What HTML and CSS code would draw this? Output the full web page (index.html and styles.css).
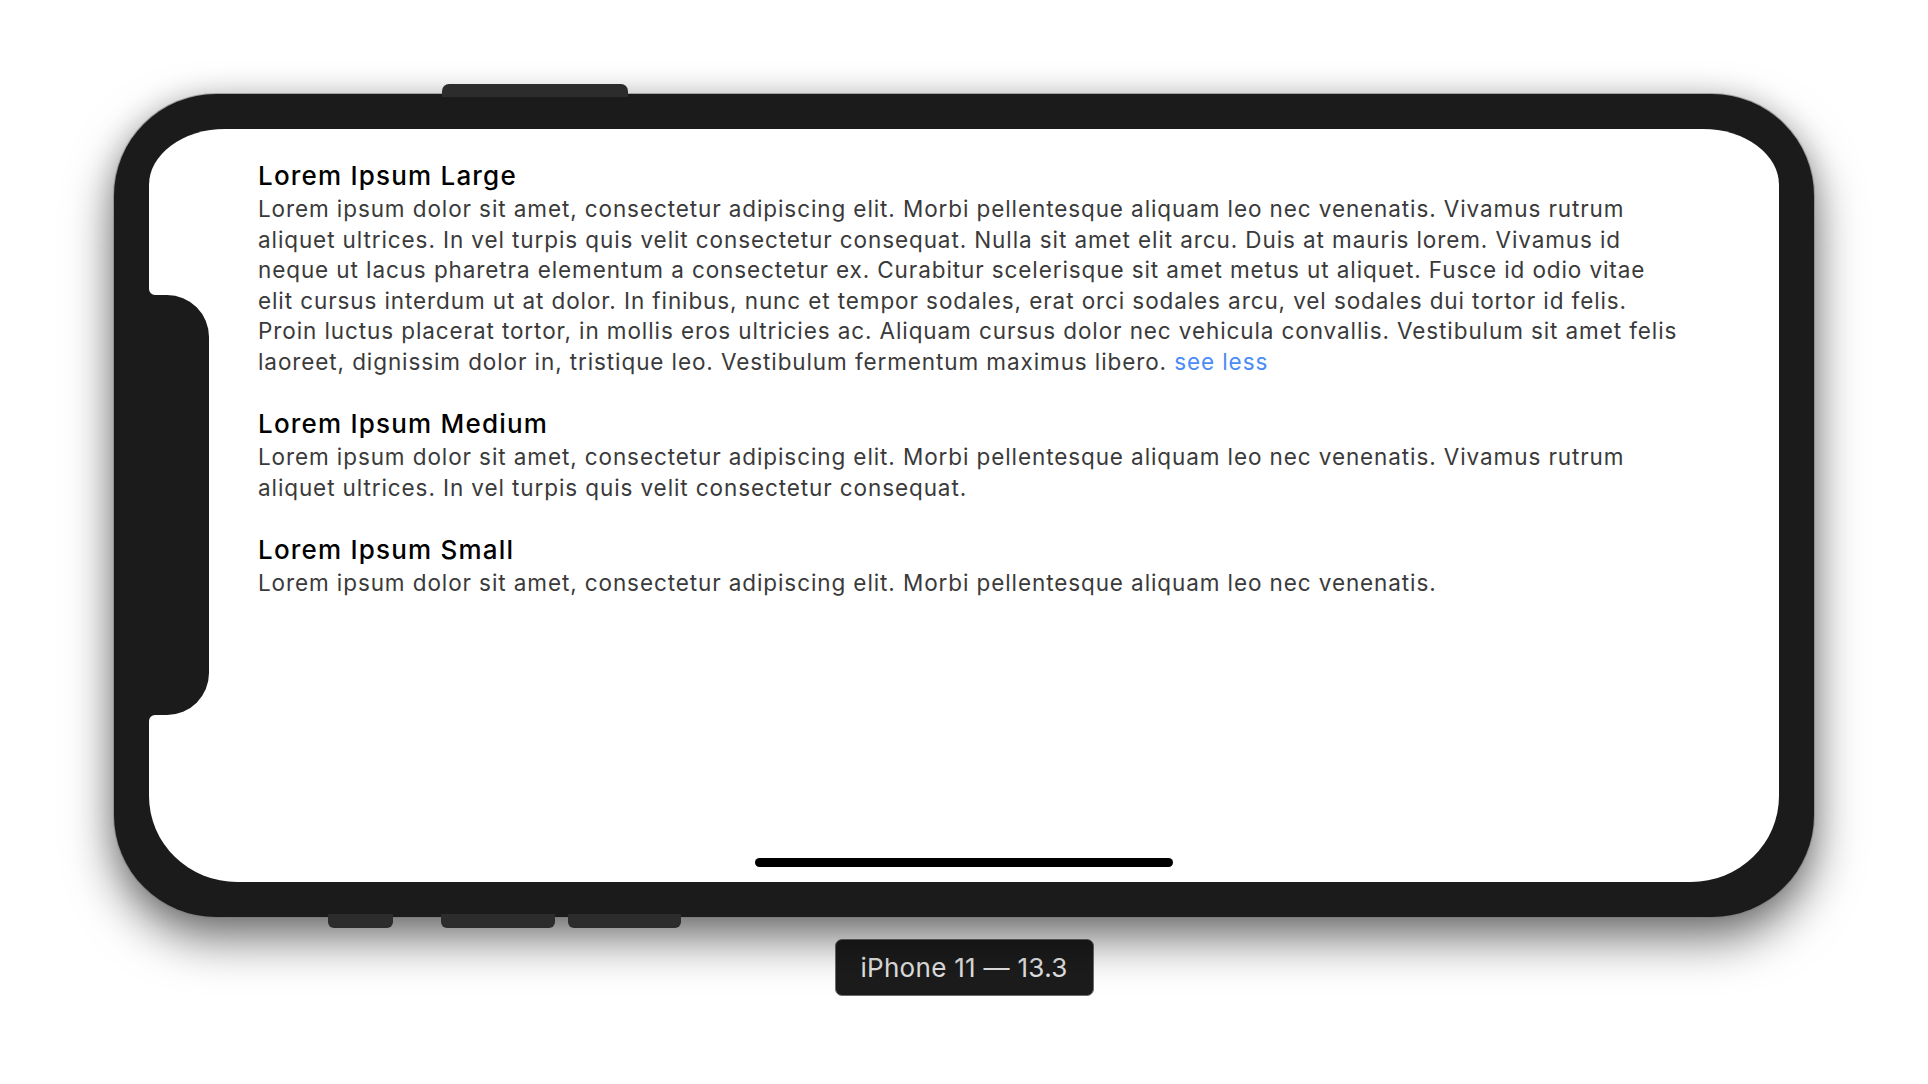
FILE: index.html
```html
<!DOCTYPE html>
<html lang="en">
<head>
<meta charset="utf-8">
<title>iPhone 11 — 13.3</title>
<link rel="stylesheet" href="styles.css">
</head>
<body>
<div class="stage">
  <div class="device">
    <div class="hw-btn hw-side"></div>
    <div class="hw-btn hw-mute"></div>
    <div class="hw-btn hw-vol-up"></div>
    <div class="hw-btn hw-vol-down"></div>
    <div class="screen">
      <svg class="sensor" width="60" height="432" viewBox="0 0 60 432" aria-hidden="true">
        <path d="M0,0 A6,6 0 0 0 6,6 L18,6 A42,42 0 0 1 60,48 L60,384 A42,42 0 0 1 18,426 L6,426 A6,6 0 0 0 0,432 Z" fill="#1b1b1b"/>
      </svg>
      <div class="content">
        <section class="item">
          <h2 class="item-title">Lorem Ipsum Large</h2>
          <p class="item-text">Lorem ipsum dolor sit amet, consectetur adipiscing elit. Morbi pellentesque aliquam leo nec venenatis. Vivamus rutrum aliquet ultrices. In vel turpis quis velit consectetur consequat. Nulla sit amet elit arcu. Duis at mauris lorem. Vivamus id neque ut lacus pharetra elementum a consectetur ex. Curabitur scelerisque sit amet metus ut aliquet. Fusce id odio vitae elit cursus interdum ut at dolor. In finibus, nunc et tempor sodales, erat orci sodales arcu, vel sodales dui tortor id felis. Proin luctus placerat tortor, in mollis eros ultricies ac. Aliquam cursus dolor nec vehicula convallis. Vestibulum sit amet felis laoreet, dignissim dolor in, tristique leo. Vestibulum fermentum maximus libero. <a class="see-less" href="#">see less</a></p>
        </section>
        <section class="item">
          <h2 class="item-title">Lorem Ipsum Medium</h2>
          <p class="item-text">Lorem ipsum dolor sit amet, consectetur adipiscing elit. Morbi pellentesque aliquam leo nec venenatis. Vivamus rutrum aliquet ultrices. In vel turpis quis velit consectetur consequat.</p>
        </section>
        <section class="item">
          <h2 class="item-title">Lorem Ipsum Small</h2>
          <p class="item-text">Lorem ipsum dolor sit amet, consectetur adipiscing elit. Morbi pellentesque aliquam leo nec venenatis.</p>
        </section>
      </div>
      <div class="home-indicator"></div>
    </div>
  </div>
  <div class="device-label">iPhone 11 — 13.3</div>
</div>
</body>
</html>
```
FILE: styles.css
```css
html, body {
  margin: 0;
  padding: 0;
  background: #ffffff;
}

body {
  width: 1928px;
  height: 1084px;
  overflow: hidden;
  font-family: Inter, "Noto Sans", "DejaVu Sans", sans-serif;
}

.stage {
  display: flex;
  flex-direction: column;
  align-items: center;
  padding-top: 94px;
}

.device {
  position: relative;
  box-sizing: border-box;
  width: 1700px;
  height: 823px;
  padding: 35px;
  background: #1b1b1b;
  border-radius: 102px;
  box-shadow:
    0 0 0 1px rgba(120, 120, 120, 0.55),
    0 22px 48px rgba(0, 0, 0, 0.55),
    0 0 28px rgba(0, 0, 0, 0.14);
}

.hw-btn {
  position: absolute;
  background: #2c2c2c;
  border-radius: 6px;
}

.hw-side {
  left: 328px;
  top: -10px;
  width: 186px;
  height: 13px;
  border-radius: 7px 7px 0 0;
}

.hw-mute {
  left: 214px;
  bottom: -11px;
  width: 65px;
  height: 14px;
  border-radius: 0 0 6px 6px;
}

.hw-vol-up {
  left: 327px;
  bottom: -11px;
  width: 114px;
  height: 14px;
  border-radius: 0 0 6px 6px;
}

.hw-vol-down {
  left: 454px;
  bottom: -11px;
  width: 113px;
  height: 14px;
  border-radius: 0 0 6px 6px;
}

.screen {
  position: relative;
  box-sizing: border-box;
  width: 1630px;
  height: 753px;
  background: #ffffff;
  border-radius: 76px 76px 88px 88px / 56px 56px 86px 86px;
  display: flex;
  flex-direction: column;
  overflow: hidden;
}

.sensor {
  position: absolute;
  left: 0;
  top: 160px;
  display: block;
}

.content {
  flex: 1;
  padding: 29px 99px 0 109px;
  display: flex;
  flex-direction: column;
  gap: 29px;
}

.item {
  display: flex;
  flex-direction: column;
}

.item-title {
  margin: 0;
  font-size: 26px;
  line-height: 36px;
  font-weight: 500;
  color: #000000;
  letter-spacing: 1.2px;
}

.item-text {
  margin: 0;
  font-size: 22.5px;
  line-height: 30.5px;
  font-weight: 400;
  color: #3a3a3a;
  letter-spacing: 0.9px;
}

.see-less {
  color: #4a8cf6;
  text-decoration: none;
}

.home-indicator {
  align-self: center;
  width: 418px;
  height: 9px;
  margin-bottom: 15px;
  background: #000000;
  border-radius: 5px;
}

.device-label {
  box-sizing: border-box;
  margin-top: 22px;
  width: 259px;
  height: 57px;
  display: flex;
  align-items: center;
  justify-content: center;
  background: #1c1c1c;
  border: 1px solid #6e6e6e;
  border-radius: 7px;
  color: #e4e4e4;
  font-size: 26px;
  letter-spacing: 0.3px;
}
```
